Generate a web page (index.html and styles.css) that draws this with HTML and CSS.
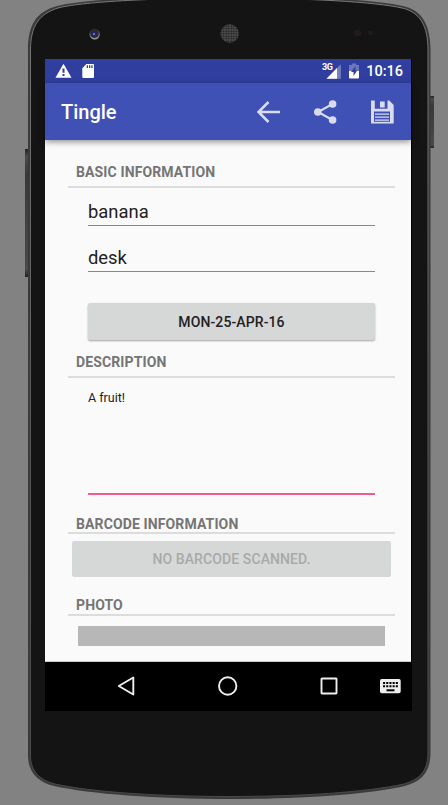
FILE: index.html
```html
<!DOCTYPE html>
<html lang="en">
<head>
<meta charset="utf-8">
<title>Tingle</title>
<link rel="stylesheet" href="styles.css">
</head>
<body>
<div class="device">
  <svg class="shell" width="448" height="805" viewBox="0 0 448 805" aria-hidden="true">
    <defs>
      <linearGradient id="key" x1="0" y1="0" x2="0" y2="1">
        <stop offset="0" stop-color="#222"/><stop offset=".06" stop-color="#4a4b4c"/><stop offset=".2" stop-color="#373939"/><stop offset=".94" stop-color="#484949"/><stop offset="1" stop-color="#222"/>
      </linearGradient>
      <linearGradient id="rim" x1="0" y1="0" x2="0" y2="1">
        <stop offset="0" stop-color="#77797c"/><stop offset=".5" stop-color="#595a5e"/><stop offset="1" stop-color="#484848"/>
      </linearGradient>
      <pattern id="mesh" width="2.500" height="2.500" patternUnits="userSpaceOnUse">
        <rect width="2.500" height="2.500" fill="#505050"/><circle cx="1.250" cy="1.250" r=".9" fill="#171717"/>
      </pattern>
      <linearGradient id="ring" x1="0" y1="0" x2="0" y2="1">
        <stop offset="0" stop-color="#333"/><stop offset="1" stop-color="#a0a0a0"/>
      </linearGradient>
    </defs>
    <rect x="25" y="149" width="5" height="128" fill="url(#key)"/>
    <rect x="429" y="96" width="5" height="52" fill="url(#key)"/>
    <path d="M28 50C28 25 36 12 57 6C80 0 150-4 229-4C308-4 377 0 403 6C422 10 430.500 25 430.500 50L430.500 752C430.500 771 423 781 405 786C365 795 300 799 229 799C158 799 90 794 54 786C37 782 28 771 28 756Z" fill="#3a3a3b"/>
    <path d="M30.500 50C30.500 26 39 14 58 8C80 2 150-2 229-2C308-2 376 2 402 8C420 12 428 26 428 50L428 752C428 770 421 779 404 784C365 792.500 300 796.500 229 796.500C158 796.500 91 792 55 784C39 780 30.500 770 30.500 756Z" fill="#141414" stroke="url(#rim)"/>
    <circle cx="94.700" cy="34.200" r="5.200" fill="url(#ring)"/>
    <circle cx="94.500" cy="33.800" r="4.100" fill="#29292f"/>
    <circle cx="94.300" cy="33.800" r="2.700" fill="#25256c"/>
    <circle cx="94" cy="34" r="1" fill="#8989c4"/>
    <circle cx="229.700" cy="33.500" r="9.300" fill="url(#mesh)"/>
    <circle cx="357.500" cy="33" r="3.500" fill="#211b1b"/>
    <circle cx="370.500" cy="33" r="2.300" fill="#211c1c"/>
  </svg>

  <div class="screen">
    <div class="status-bar">
      <svg class="warn" width="17" height="16" viewBox="0 0 17 16"><path d="M8.500.8 16.500 14.700H.5Z" fill="#fff"/><path d="M7.500 5.500h2v4.200h-2zM7.500 11h2v1.900h-2z" fill="#303f9f"/></svg>
      <svg class="card" width="12" height="16" viewBox="0 0 12 16"><path d="M4.300 1H11a1 1 0 0 1 1 1v12a1 1 0 0 1-1 1H1.300a1 1 0 0 1-1-1V5.200Z" fill="#fff"/><path d="M4.700 2.200H6v2.900H4.700zM7 2.200h1.300v2.900H7zM9.300 2.200h1.300v2.900H9.300z" fill="#303f9f"/></svg>
      <span class="network">3G</span>
      <svg class="signal" width="15" height="15" viewBox="0 0 15 15"><path d="M14.800.3V14.700H.5Z" fill="#7480c0"/><path d="M11 4.100V14.700H.5Z" fill="#fff"/></svg>
      <svg class="battery" width="10" height="16" viewBox="0 0 10 16"><path d="M0 2h2.800V.5h4.400V2H10v6H0Z" fill="#6b77bb"/><path d="M0 8h10v6.500a1 1 0 0 1-1 1H1a1 1 0 0 1-1-1Z" fill="#fff"/><path d="M6.500 3.200 2 9H4.500v4L8.200 7.500H6.500Z" fill="#303f9f"/></svg>
      <span class="clock">10:16</span>
    </div>

    <header class="app-bar">
      <h1>Tingle</h1>
      <svg width="24" height="24" viewBox="0 0 24 24"><path d="M24 12H2.500M12.500 2 2.500 12l10 10" fill="none" stroke="#d9dcf0" stroke-width="2.500"/></svg>
      <svg width="24" height="24" viewBox="0 0 24 24"><path d="M19.500 4 5 12 19.500 20" fill="none" stroke="#d9dcf0" stroke-width="2"/><g fill="#d9dcf0"><circle cx="19.600" cy="4" r="3.800"/><circle cx="4.800" cy="12" r="3.800"/><circle cx="19.600" cy="20" r="3.800"/></g></svg>
      <svg width="24" height="24" viewBox="0 0 24 24"><path d="M1 .5h3.800v8.200h12.700V.5h1.700l4.500 4.500v18.500H1Z" fill="#d9dcf0"/><path d="M10 1.500h4.700v6H10z" fill="#d9dcf0"/><path d="M4 11.500h16v10.300H4z" fill="#3f51b5"/><path d="M5 14.200h14M5 17.200h14M5 20.200h14" stroke="#d9dcf0" stroke-width="1.300"/></svg>
    </header>

    <main class="form">
      <h2 class="section basic">Basic information</h2>
      <div class="field name">banana</div>
      <div class="field place">desk</div>
      <button class="date">MON-25-APR-16</button>
      <h2 class="section description">Description</h2>
      <div class="notes">A fruit!</div>
      <h2 class="section barcode">Barcode information</h2>
      <button class="scan" disabled>NO BARCODE SCANNED.</button>
      <h2 class="section photo">Photo</h2>
      <div class="preview"></div>
    </main>

    <nav class="nav-bar">
      <svg class="back" width="20" height="22" viewBox="0 0 20 22"><path d="M17.300 2.500v17L2.800 11Z" fill="none" stroke="#eee" stroke-width="1.900" stroke-linejoin="round"/></svg>
      <svg class="home" width="22" height="22" viewBox="0 0 22 22"><circle cx="10.700" cy="11" r="8.700" fill="none" stroke="#eee" stroke-width="1.900"/></svg>
      <svg class="recent" width="18" height="18" viewBox="0 0 18 18"><rect x="1.500" y="1.500" width="15" height="15" rx=".5" fill="none" stroke="#eee" stroke-width="1.900"/></svg>
      <svg class="keyboard" width="21" height="15" viewBox="0 0 21 15"><rect width="20.700" height="14.300" rx="1.700" fill="#eee"/><path d="M3 4h15M3 7.300h15" stroke="#000" stroke-width="2.100" stroke-dasharray="2.100 1.100"/><path d="M6.500 11.300h8" stroke="#000" stroke-width="2"/></svg>
    </nav>
  </div>
</div>
</body>
</html>
```

FILE: styles.css
```css
* {
  box-sizing: border-box;
}

body {
  margin: 0;
  background: #828282;
  font-family: Roboto, "Liberation Sans", sans-serif;
}

.device {
  position: relative;
  height: 805px;
  padding: 59px 36px 0 45px;
  overflow: hidden;
}

.shell {
  position: absolute;
  inset: 0;
}

.screen {
  position: relative;
  width: 367px;
  height: 652px;
  display: flex;
  flex-direction: column;
  background: #000;
}

.status-bar,
.app-bar,
.form {
  width: 366px;
}

.status-bar {
  height: 24px;
  display: flex;
  align-items: center;
  padding: 0 8px 0 9.500px;
  background: #303f9f;
  color: #fff;
}

.card {
  margin-left: 10px;
}

.network {
  margin: 0 -6px 7px auto;
  font-size: 9px;
  font-weight: 700;
  line-height: 9px;
  letter-spacing: -.6px;
}

.battery {
  margin-left: 8px;
}

.clock {
  margin-left: 7px;
  padding-top: 2px;
  font-size: 14.500px;
  font-weight: 500;
  line-height: 24px;
}

.app-bar {
  position: relative;
  height: 57px;
  display: flex;
  align-items: center;
  gap: 33px;
  padding: 0 17px 0 16px;
  background: #3f51b5;
  box-shadow: 0 2px 6px rgba(0, 0, 0, .42);
}

.app-bar h1 {
  margin: 0 auto 0 0;
  padding-top: 1px;
  color: #fff;
  font-size: 20px;
  font-weight: 500;
  line-height: 24px;
}

.form {
  height: 521.500px;
  padding: 22px 16px 0 23px;
  background: #fafafa;
  border-bottom: 1px solid #ccc;
}

.section {
  height: 26px;
  margin: 0;
  padding-left: 8px;
  border-bottom: 2px solid #dcdcdc;
  color: #757575;
  font-size: 14px;
  font-weight: 700;
  line-height: 21px;
  letter-spacing: .12px;
  text-transform: uppercase;
}

.field,
.notes {
  margin: 0 20px;
  color: #212121;
}

.field {
  border-bottom: 1px solid #888;
  font-size: 18.400px;
}

.name {
  height: 38px;
  line-height: 48px;
}

.place {
  height: 46px;
  line-height: 64px;
}

.date,
.scan {
  display: block;
  border: 0;
  border-radius: 2px;
  background: #d6d7d7;
  color: #212121;
  font: 500 14px Roboto, "Liberation Sans", sans-serif;
  letter-spacing: .1px;
}

.date {
  width: 287px;
  height: 37px;
  margin: 31px 20px 12px;
  box-shadow: 0 1px 2px rgba(0, 0, 0, .35);
}

.notes {
  height: 117px;
  padding-top: 12px;
  border-bottom: 2px solid #f45b8d;
  font-size: 12.500px;
  line-height: 16px;
}

.barcode {
  height: 21px;
  margin-top: 18px;
  line-height: 22px;
}

.scan {
  width: 319px;
  height: 36px;
  margin: 7px 4px 18px;
  color: #a8a9a9;
}

.photo {
  height: 21px;
}

.preview {
  width: 307px;
  height: 20px;
  margin: 10px 10px 0;
  background: #b7b7b7;
}

.nav-bar {
  height: 49.500px;
  display: flex;
  align-items: center;
  padding-left: 71px;
}

.home {
  margin-left: 81px;
}

.recent {
  margin-left: 81.300px;
}

.keyboard {
  margin-left: 41.700px;
}
```
